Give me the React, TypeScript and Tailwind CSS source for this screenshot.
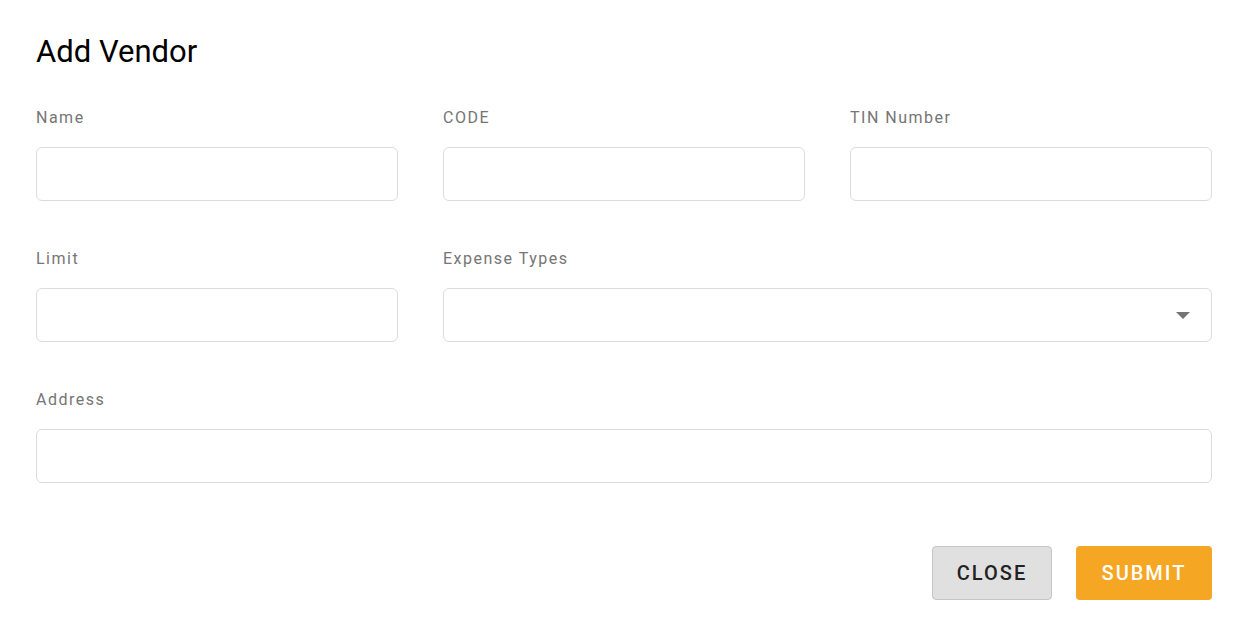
function Field({ label, className = '', select = false }: { label: string; className?: string; select?: boolean }) {
    return (
        <div className={className}>
            <label className="block pt-[1px] text-[16px] leading-[20px] tracking-[1.5px] text-[#757575]">{label}</label>
            <div className="mt-[19px] flex h-[54px] items-center justify-end rounded-[6px] border border-[#dcdcdc] bg-white pr-[21px]">
                {select && (
                    <svg width="14" height="7" viewBox="0 0 14 7">
                        <path d="M0 0h14L7 7z" fill="#757575" />
                    </svg>
                )}
            </div>
        </div>
    );
}

export default function App() {
    return (
        <div className="min-h-[618px] bg-white pt-[33px] pl-[36px] pr-[31px] font-['Roboto',sans-serif]">
            <h1 className="text-[31px] leading-[38px] font-normal text-black">Add Vendor</h1>

            <div className="mt-[36px] grid grid-cols-3 gap-x-[45px] gap-y-[47px]">
                <Field label="Name" />
                <Field label="CODE" />
                <Field label="TIN Number" />
                <Field label="Limit" />
                <Field label="Expense Types" className="col-span-2" select />
                <Field label="Address" className="col-span-3" />
            </div>

            <div className="mt-[63px] flex justify-end gap-[24px]">
                <button className="h-[54px] w-[120px] rounded-[4px] border border-[#c6c6c6] bg-[#e0e0e0] text-[20px] font-medium tracking-[0.1em] text-[#222]">
                    CLOSE
                </button>
                <button className="h-[54px] w-[136px] rounded-[4px] bg-[#f5a623] text-[20px] font-medium tracking-[0.1em] text-white">
                    SUBMIT
                </button>
            </div>
        </div>
    );
}
